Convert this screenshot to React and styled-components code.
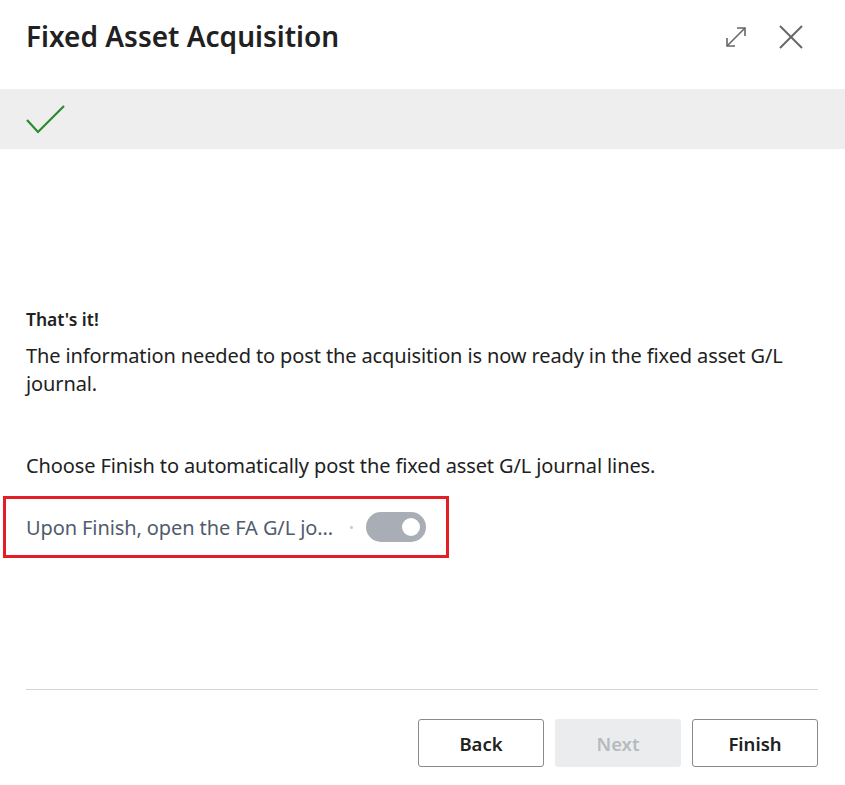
import React from 'react';
import styled, { createGlobalStyle } from 'styled-components';

const GlobalStyle = createGlobalStyle`
  html, body {
    margin: 0;
    padding: 0;
    background: #fff;
  }
  body {
    font-family: "Noto Sans", "Open Sans", sans-serif;
    color: #212121;
  }
`;

const Dialog = styled.div`
  width: 845px;
  height: 785px;
  display: flex;
  flex-direction: column;
  background: #fff;
  box-sizing: border-box;
`;

const Header = styled.header`
  height: 89px;
  display: flex;
  align-items: center;
  justify-content: space-between;
  padding: 0 42px 0 26px;
  box-sizing: border-box;
`;

const Title = styled.h1`
  margin: 0 0 18px;
  font-size: 28px;
  font-weight: 600;
  color: #212121;
`;

const HeaderActions = styled.div`
  display: flex;
  align-items: center;
  gap: 31px;
  margin-bottom: 16px;
`;

const IconButton = styled.button`
  width: 24px;
  height: 24px;
  padding: 0;
  border: none;
  background: none;
  display: flex;
  align-items: center;
  justify-content: center;
  cursor: pointer;
`;

const StatusBand = styled.div`
  height: 60px;
  background: #eeeeee;
  display: flex;
  align-items: center;
  padding-left: 26px;
`;

const Content = styled.main`
  flex: 1;
  padding: 158px 26px 0;
  display: flex;
  flex-direction: column;
`;

const Heading = styled.h2`
  margin: 0 0 11px;
  font-size: 17.5px;
  font-weight: 600;
  line-height: 24px;
`;

const Paragraph = styled.p`
  margin: 0 0 ${(p) => p.$gap || 0}px;
  font-size: 20px;
  line-height: 28px;
  letter-spacing: -0.12px;
`;

const ToggleRow = styled.div`
  width: 446px;
  height: 62px;
  margin: 16px 0 0 -23px;
  border: 3px solid #e31e24;
  box-sizing: border-box;
  display: flex;
  align-items: center;
  padding-left: 20px;
`;

const ToggleLabel = styled.span`
  font-size: 20px;
  color: #505c6d;
  letter-spacing: -0.1px;
  white-space: nowrap;
`;

const Dot = styled.span`
  width: 3px;
  height: 3px;
  border-radius: 50%;
  background: #c8c8c8;
  margin: 0 13px 0 17px;
`;

const Switch = styled.span`
  width: 60px;
  height: 30px;
  border-radius: 15px;
  background: #a9adb5;
  display: flex;
  align-items: center;
  justify-content: ${(p) => (p.$on ? 'flex-end' : 'flex-start')};
  padding: 0 6px;
  box-sizing: border-box;
`;

const Knob = styled.span`
  width: 18px;
  height: 18px;
  border-radius: 50%;
  background: #fff;
`;

const Footer = styled.footer`
  margin: 0 27px 0 26px;
  border-top: 1px solid #d4d4d4;
  padding: 29px 0 18px;
  display: flex;
  justify-content: flex-end;
  gap: 11px;
`;

const Button = styled.button`
  width: 126px;
  height: 48px;
  box-sizing: border-box;
  border-radius: 3px;
  border: 1px solid ${(p) => (p.disabled ? '#ebecee' : '#8a8a8a')};
  background: ${(p) => (p.disabled ? '#ebecee' : '#fff')};
  color: ${(p) => (p.disabled ? '#b6bac0' : '#212121')};
  font-family: "Noto Sans", "Open Sans", sans-serif;
  font-size: 18.5px;
  font-weight: 600;
  cursor: ${(p) => (p.disabled ? 'default' : 'pointer')};
`;

const ExpandIcon = () => (
  <svg width="24" height="24" viewBox="0 0 24 24" fill="none" stroke="#666" strokeWidth="1.6">
    <line x1="3" y1="21" x2="21" y2="3" />
    <polyline points="13,3 21,3 21,11" />
    <polyline points="3,13 3,21 11,21" />
  </svg>
);

const CloseIcon = () => (
  <svg width="24" height="24" viewBox="0 0 24 24" fill="none" stroke="#666" strokeWidth="2">
    <line x1="1" y1="1" x2="23" y2="23" />
    <line x1="23" y1="1" x2="1" y2="23" />
  </svg>
);

const CheckIcon = () => (
  <svg width="40" height="30" viewBox="0 0 40 30" fill="none" stroke="#2b8a2b" strokeWidth="2.2">
    <polyline points="1,16 12,28 38,2" />
  </svg>
);

export default function App() {
  return (
    <>
      <GlobalStyle />
      <Dialog>
        <Header>
          <Title>Fixed Asset Acquisition</Title>
          <HeaderActions>
            <IconButton aria-label="Expand"><ExpandIcon /></IconButton>
            <IconButton aria-label="Close"><CloseIcon /></IconButton>
          </HeaderActions>
        </Header>
        <StatusBand>
          <CheckIcon />
        </StatusBand>
        <Content>
          <Heading>That's it!</Heading>
          <Paragraph $gap={54}>
            The information needed to post the acquisition is now ready in the fixed asset G/L journal.
          </Paragraph>
          <Paragraph>Choose Finish to automatically post the fixed asset G/L journal lines.</Paragraph>
          <ToggleRow>
            <ToggleLabel>Upon Finish, open the FA G/L jo...</ToggleLabel>
            <Dot />
            <Switch $on>
              <Knob />
            </Switch>
          </ToggleRow>
        </Content>
        <Footer>
          <Button>Back</Button>
          <Button disabled>Next</Button>
          <Button>Finish</Button>
        </Footer>
      </Dialog>
    </>
  );
}
